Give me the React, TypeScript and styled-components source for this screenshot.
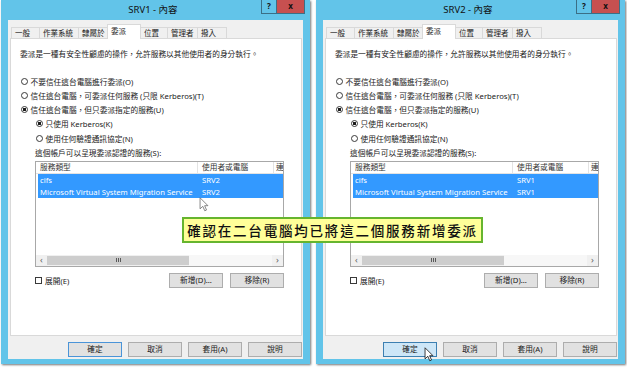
import React from 'react';
import styled, { createGlobalStyle } from 'styled-components';

const GlobalStyle = createGlobalStyle`
  body {
    margin: 0;
    background: #fff;
    font-family: 'Noto Sans', 'Noto Sans CJK TC', sans-serif;
  }
  * {
    box-sizing: border-box;
  }
`;

const frameBlue = '#62c4e9';

interface DialogProps {
  server: string;
  peer: string;
  okHover?: boolean;
}

const tabs = [
  { label: '一般', w: 29 },
  { label: '作業系統', w: 40 },
  { label: '隸屬於', w: 30 },
  { label: '委派', w: 34, active: true },
  { label: '位置', w: 28 },
  { label: '管理者', w: 31 },
  { label: '撥入', w: 30 },
];

const Dialog: React.FC<DialogProps> = ({ server, peer, okHover }) => (
  <Window>
    <TitleBar>
      <span />
      <Title>{server} - 內容</Title>
      <Captions>
        <CaptionButton>?</CaptionButton>
        <CaptionButton $close>x</CaptionButton>
      </Captions>
    </TitleBar>
    <Client>
      <TabStrip>
        {tabs.map((t) => (
          <Tab key={t.label} $w={t.w} $active={!!t.active}>
            {t.label}
          </Tab>
        ))}
      </TabStrip>
      <Panel>
        <Description>
          委派是一種有安全性顧慮的操作，允許服務以其他使用者的身分執行。
        </Description>
        <Options>
          <RadioRow>
            <Radio />
            不要信任這台電腦進行委派(O)
          </RadioRow>
          <RadioRow>
            <Radio />
            信任這台電腦，可委派任何服務 (只限 Kerberos)(T)
          </RadioRow>
          <RadioRow>
            <Radio $checked />
            信任這台電腦，但只委派指定的服務(U)
          </RadioRow>
          <Indent>
            <RadioRow>
              <Radio $checked />
              只使用 Kerberos(K)
            </RadioRow>
            <RadioRow>
              <Radio />
              使用任何驗證通訊協定(N)
            </RadioRow>
            <ListLabel>這個帳戶可以呈現委派認證的服務(S):</ListLabel>
            <ListView>
              <ListHeader>
                <HeaderCell $w={162}>服務類型</HeaderCell>
                <HeaderCell $w={76}>使用者或電腦</HeaderCell>
                <HeaderCell $w={10}>連</HeaderCell>
              </ListHeader>
              <ListRow>
                <Cell $w={160}>cifs</Cell>
                <Cell $w={60}>{peer}</Cell>
              </ListRow>
              <ListRow>
                <Cell $w={160}>Microsoft Virtual System Migration Service</Cell>
                <Cell $w={60}>{peer}</Cell>
              </ListRow>
              <Spacer />
              <HScroll>
                <ScrollArrow>‹</ScrollArrow>
                <Thumb>
                  <Grip />
                </Thumb>
                <Track />
                <ScrollArrow>›</ScrollArrow>
              </HScroll>
            </ListView>
            <ListActions>
              <CheckLabel>
                <CheckBox />
                展開(E)
              </CheckLabel>
              <Spacer />
              <Button>新增(D)...</Button>
              <Button>移除(R)</Button>
            </ListActions>
          </Indent>
        </Options>
      </Panel>
      <Footer>
        <Button $variant={okHover ? 'hover' : 'default'}>確定</Button>
        <Button>取消</Button>
        <Button>套用(A)</Button>
        <Button>說明</Button>
      </Footer>
    </Client>
  </Window>
);

const Cursor: React.FC<{ x: number; y: number; stroke: string; fill: string }> = ({
  x,
  y,
  stroke,
  fill,
}) => (
  <CursorSvg style={{ left: x, top: y }} width="10" height="15" viewBox="0 0 12 19">
    <path
      d="M1 1 L1 15 L4.5 11.8 L7 17.5 L9.2 16.5 L6.8 11 L11 11 Z"
      fill={fill}
      stroke={stroke}
      strokeWidth="1"
      strokeLinejoin="round"
    />
  </CursorSvg>
);

const App: React.FC = () => (
  <>
    <GlobalStyle />
    <Page>
      <Dialog server="SRV1" peer="SRV2" />
      <Dialog server="SRV2" peer="SRV1" okHover />
      <Callout>確認在二台電腦均已將這二個服務新增委派</Callout>
      <Cursor x={199} y={197} stroke="#6a6a6a" fill="rgba(255,255,255,0.85)" />
      <Cursor x={424} y={347} stroke="#111" fill="#fff" />
    </Page>
  </>
);

const Page = styled.div`
  position: relative;
  display: flex;
  gap: 6px;
  padding-left: 1px;
  width: 627px;
  height: 369px;
  overflow: hidden;
  background: #fff;
`;

const Window = styled.div`
  width: 309px;
  height: 364px;
  display: flex;
  flex-direction: column;
  background: ${frameBlue};
  box-shadow: 1px 1px 2px rgba(0, 0, 0, 0.55);
`;

const TitleBar = styled.div`
  height: 20px;
  display: grid;
  grid-template-columns: 1fr auto 1fr;
  padding-right: 5px;
`;

const Title = styled.div`
  line-height: 20px;
  font-size: 9.5px;
  color: #111;
`;

const Captions = styled.div`
  justify-self: end;
  display: flex;
  height: 14px;
`;

const CaptionButton = styled.div<{ $close?: boolean }>`
  width: ${(p) => (p.$close ? 28 : 16)}px;
  height: 14px;
  border: 1px solid #3b6f86;
  border-top: none;
  ${(p) => (p.$close ? 'border-left: none;' : '')}
  background: ${(p) => (p.$close ? '#c75050' : frameBlue)};
  color: #111;
  font-size: 8px;
  font-weight: 700;
  text-align: center;
  line-height: 12px;
`;

const Client = styled.div`
  flex: 1;
  margin: 0 7px 5px;
  padding: 4px 1px 0 2px;
  background: #f0f0f0;
  display: flex;
  flex-direction: column;
  font-size: 7.7px;
  color: #1a1a1a;
`;

const TabStrip = styled.div`
  height: 14px;
  display: flex;
  align-items: flex-end;
  padding-left: 2px;
`;

const Tab = styled.div<{ $w: number; $active: boolean }>`
  position: relative;
  z-index: ${(p) => (p.$active ? 1 : 0)};
  width: ${(p) => p.$w}px;
  height: ${(p) => (p.$active ? 15 : 11.5)}px;
  margin-left: -1px;
  margin-bottom: ${(p) => (p.$active ? -1 : 0)}px;
  border: 1px solid #d9d9d9;
  border-bottom: none;
  background: ${(p) => (p.$active ? '#fff' : '#f0f0f0')};
  padding-left: 3px;
  font-size: 7.5px;
  line-height: ${(p) => (p.$active ? 12 : 10)}px;
  white-space: nowrap;
  overflow: hidden;
`;

const Panel = styled.div`
  height: 298px;
  background: #fff;
  border: 1px solid #d9d9d9;
  padding: 9px 17px 0 9px;
  display: flex;
  flex-direction: column;
`;

const Description = styled.div`
  height: 12px;
  line-height: 12px;
  white-space: nowrap;
`;

const Options = styled.div`
  margin-top: 14px;
  display: flex;
  flex-direction: column;
`;

const RadioRow = styled.div`
  height: 14.25px;
  display: flex;
  align-items: center;
  gap: 3px;
  padding-left: 0.5px;
  white-space: nowrap;
`;

const Radio = styled.span<{ $checked?: boolean }>`
  width: 7px;
  height: 7px;
  border-radius: 50%;
  border: 1px solid #3a3a3a;
  background: ${(p) =>
    p.$checked ? 'radial-gradient(circle, #1a1a1a 0 1.4px, #fff 1.9px)' : '#fff'};
`;

const Indent = styled.div`
  margin-left: 15px;
  display: flex;
  flex-direction: column;
`;

const ListLabel = styled.div`
  margin-top: 1.5px;
  height: 12px;
  line-height: 12px;
  white-space: nowrap;
`;

const ListView = styled.div`
  margin-top: 2px;
  height: 106px;
  border: 1px solid #a8a8a8;
  display: flex;
  flex-direction: column;
  overflow: hidden;
`;

const ListHeader = styled.div`
  height: 12.5px;
  display: flex;
  border-bottom: 1px solid #e3e3e3;
  flex-shrink: 0;
`;

const HeaderCell = styled.div<{ $w: number }>`
  flex: 0 0 ${(p) => p.$w}px;
  padding-left: 4px;
  border-right: 1px solid #e3e3e3;
  line-height: 11px;
  white-space: nowrap;
  color: #333;

  &:last-child {
    padding-left: 2px;
    border-right: none;
  }
`;

const ListRow = styled.div`
  height: 12px;
  margin-left: 2px;
  display: flex;
  background: #3399ff;
  color: #fff;
  flex-shrink: 0;
`;

const Cell = styled.div<{ $w: number }>`
  flex: 0 0 ${(p) => p.$w}px;
  padding-left: 2px;
  line-height: 12px;
  white-space: nowrap;

  & + & {
    padding-left: 4px;
  }
`;

const Spacer = styled.div`
  flex: 1;
`;

const HScroll = styled.div`
  height: 11px;
  display: flex;
  flex-shrink: 0;
  background: #f0f0f0;
`;

const ScrollArrow = styled.div`
  width: 11px;
  text-align: center;
  line-height: 10px;
  font-size: 9px;
  color: #606060;
`;

const Thumb = styled.div`
  width: 142px;
  margin: 1px 0;
  background: #cdcdcd;
  display: flex;
  align-items: center;
  justify-content: center;
`;

const Grip = styled.span`
  width: 5px;
  height: 4px;
  background: repeating-linear-gradient(90deg, #5a5a5a 0 1px, transparent 1px 2px);
`;

const Track = styled.div`
  flex: 1;
  background: #f7f7f7;
`;

const ListActions = styled.div`
  margin-top: 6px;
  height: 15px;
  display: flex;
  align-items: center;
  gap: 7px;
`;

const CheckLabel = styled.div`
  display: flex;
  align-items: center;
  gap: 3px;
  white-space: nowrap;
`;

const CheckBox = styled.span`
  width: 7px;
  height: 7px;
  border: 1px solid #3a3a3a;
  background: #fff;
`;

const Button = styled.div<{ $variant?: 'default' | 'hover' }>`
  width: 54px;
  height: 15px;
  border: 1px solid
    ${(p) =>
      p.$variant === 'hover' ? '#3c7fb1' : p.$variant === 'default' ? '#4a94d8' : '#adadad'};
  background: ${(p) => (p.$variant === 'hover' ? '#cde6f7' : '#e1e1e1')};
  text-align: center;
  line-height: 13px;
  white-space: nowrap;
`;

const Footer = styled.div`
  margin-top: 6px;
  display: flex;
  justify-content: flex-end;
  gap: 6px;
`;

const Callout = styled.div`
  position: absolute;
  left: 182px;
  top: 217px;
  width: 301px;
  height: 26px;
  border: 2px solid #66b52e;
  background: #ffff99;
  display: flex;
  align-items: center;
  justify-content: center;
  font-family: 'Noto Sans CJK TC', sans-serif;
  font-weight: 500;
  font-size: 13.5px;
  letter-spacing: 1.8px;
  color: #111;
`;

const CursorSvg = styled.svg`
  position: absolute;
  overflow: visible;
`;

export default App;
